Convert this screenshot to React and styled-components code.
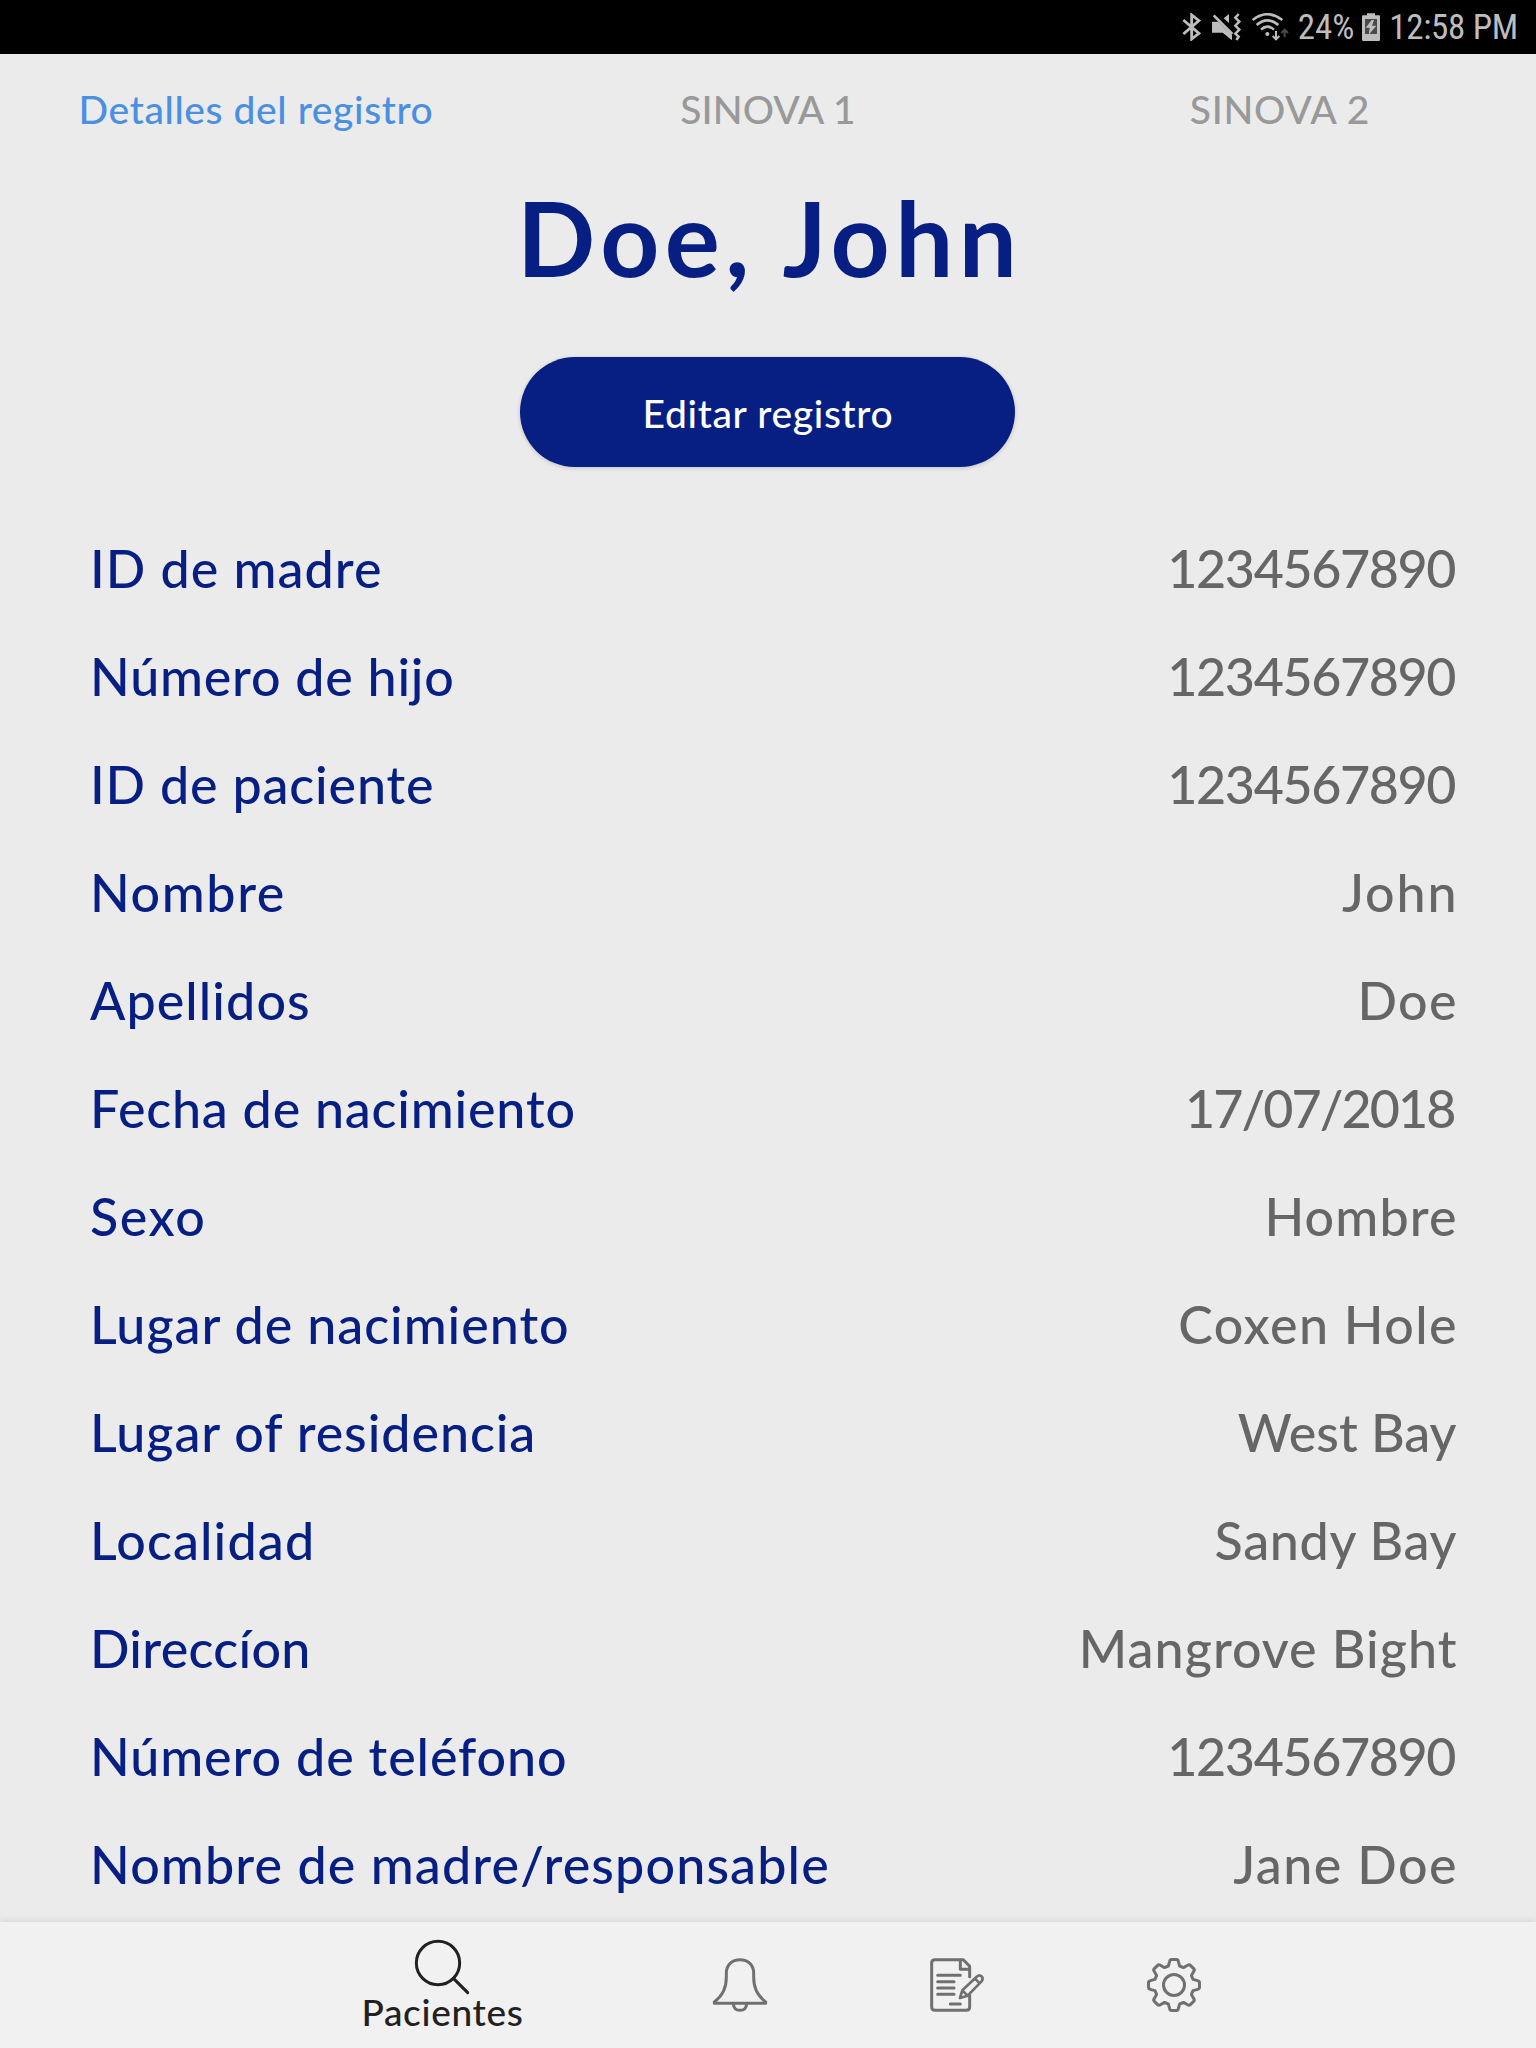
import React from 'react';
import styled, { createGlobalStyle } from 'styled-components';

const GlobalStyle = createGlobalStyle`
  * { box-sizing: border-box; }
  body { margin: 0; background: #ebebeb; }
`;

const Screen = styled.div`
  display: flex;
  flex-direction: column;
  width: 1536px;
  height: 2048px;
  overflow: hidden;
  background: #ebebeb;
  font-family: Lato, 'Open Sans', sans-serif;
  font-weight: 500;
`;

/* ---------- status bar ---------- */

const StatusBar = styled.header`
  flex: none;
  display: flex;
  align-items: center;
  justify-content: flex-end;
  gap: 11px;
  height: 54px;
  padding-right: 18px;
  background: #000;
  color: #bdbdbd;
`;

const StatusText = styled.span`
  padding-top: 1px;
  font: 400 35px/54px 'Roboto Condensed', Roboto, sans-serif;
  letter-spacing: ${(p) => p.$track}px;
  white-space: nowrap;
  margin: 0 ${(p) => p.$trim || 0}px 0 -2px;
`;

const Glyph = styled.svg`
  display: block;
  flex: none;
  width: ${(p) => p.$w}px;
  height: ${(p) => p.$h}px;
`;

const BluetoothIcon = () => (
  <Glyph $w={19} $h={28} viewBox="64 36 57 84" fill="none" stroke="currentColor" strokeWidth="8.5">
    <path d="M68 57 L115 97 L93 114 V42 L115 59 L68 99" />
  </Glyph>
);

const MuteIcon = () => (
  <Glyph $w={29} $h={28} viewBox="157 36 87 84" fill="currentColor">
    <path d="M157 62 H176 L217 103 V118 L189 95 H157 Z" />
    <path d="M192 52 L208 39 V66 Z" />
    <path d="M162 43 L218 99" fill="none" stroke="currentColor" strokeWidth="8" />
    <path
      d="M237 39 L227 50 L239 62 L227 74 L239 86 L227 98 L237 107 L230 117"
      fill="none"
      stroke="currentColor"
      strokeWidth="7.5"
    />
  </Glyph>
);

const WifiIcon = () => (
  <Glyph $w={37} $h={28} viewBox="278 36 111 84" fill="none" stroke="currentColor" strokeWidth="7.5">
    <path d="M280 57 Q324 22 369 57" />
    <path d="M292 72 Q324 44 357 72" />
    <path d="M305 86 Q324 68 344 86" />
    <circle cx="324" cy="99" r="6" fill="currentColor" stroke="none" />
    <path d="M350 90 V114 M340 105 L350 115 L360 105" strokeWidth="6" />
    <path d="M376 109 V86 M366 96 L376 86 L386 96" strokeWidth="6" stroke="#4a4a4a" />
  </Glyph>
);

const BatteryIcon = () => (
  <Glyph $w={18} $h={28} viewBox="606 36 54 84" fill="currentColor">
    <path d="M621 37 H645 V43 H657 Q660 43 660 46 V116 Q660 120 656 120 H610 Q606 120 606 116 V46 Q606 43 609 43 H621 Z" />
    <rect x="615" y="54" width="36" height="45" fill="#4a4a4a" />
    <path d="M635 57 L617 80 H629 L626 101 L649 74 H636 L642 57 Z" />
  </Glyph>
);

/* ---------- record tabs and heading ---------- */

const Tabs = styled.nav`
  flex: none;
  display: grid;
  grid-template-columns: repeat(3, 1fr);
  height: 110px;
`;

const Tab = styled.a`
  text-align: center;
  font-size: 39px;
  line-height: 110px;
  letter-spacing: ${(p) => p.$track}px;
  color: ${(p) => (p.$active ? '#4a90e2' : '#999')};
`;

const Content = styled.main`
  flex: 1;
  min-height: 0;
  display: flex;
  flex-direction: column;
  align-items: center;
  padding-right: 1px;
`;

const PatientName = styled.h1`
  margin: 13px 0 60px;
  font-size: 103px;
  font-weight: 700;
  line-height: 120px;
  letter-spacing: 5.5px;
  margin-right: -4.5px;
  color: #071e82;
  white-space: nowrap;
`;

const EditButton = styled.button`
  flex: none;
  width: 495px;
  height: 110px;
  padding: 2px 0 0 1px;
  border: 0;
  border-radius: 55px;
  background: #071e82;
  box-shadow: 0 1px 4px rgba(0, 0, 0, 0.18);
  color: #fff;
  font: 500 39px/108px Lato, sans-serif;
  letter-spacing: 0.66px;
`;

/* ---------- record fields ---------- */

const Fields = styled.dl`
  flex: none;
  align-self: stretch;
  margin: 47px 0 0;
  padding: 0 78.5px 0 90px;
`;

const Field = styled.div`
  display: flex;
  justify-content: space-between;
  height: 108px;
  font-size: 52px;
  line-height: 108px;
  white-space: nowrap;
`;

const Label = styled.dt`
  letter-spacing: ${(p) => p.$track}px;
  color: #071e82;
`;

const Value = styled.dd`
  margin: 0 ${(p) => -p.$track}px 0 0;
  letter-spacing: ${(p) => p.$track}px;
  color: #666;
`;

const fields = [
  ['ID de madre', 1.04, '1234567890', -1.38],
  ['Número de hijo', 0.79, '1234567890', -1.38],
  ['ID de paciente', 0.85, '1234567890', -1.38],
  ['Nombre', 1.6, 'John', 1.83],
  ['Apellidos', 1.08, 'Doe', 1.4],
  ['Fecha de nacimiento', 0.81, '17/07/2018', -1.9],
  ['Sexo', 1.6, 'Hombre', 1.14],
  ['Lugar de nacimiento', 0.96, 'Coxen Hole', 1.36],
  ['Lugar of residencia', 0.94, 'West Bay', 0],
  ['Localidad', 1.14, 'Sandy Bay', 0.66],
  ['Direccíon', 0.3, 'Mangrove Bight', 1.02],
  ['Número de teléfono', 0.9, '1234567890', -1.38],
  ['Nombre de madre/responsable', 1.13, 'Jane Doe', 1.44],
];

/* ---------- bottom navigation ---------- */

const BottomBar = styled.footer`
  flex: none;
  z-index: 1;
  display: grid;
  grid-template-columns: 378px 217px 217px 217px;
  justify-content: center;
  height: 126px;
  background: #f1f1f1;
  box-shadow: 0 -1px 6px rgba(0, 0, 0, 0.09);
`;

const NavItem = styled.a`
  display: flex;
  flex-direction: column;
  align-items: center;
  justify-content: ${(p) => (p.$active ? 'flex-start' : 'center')};
  padding-top: ${(p) => (p.$active ? 18 : 0)}px;
  color: ${(p) => (p.$active ? '#212121' : '#707070')};
`;

const NavIcon = styled.svg`
  display: block;
  width: 54px;
  height: 54px;
  margin-left: -1px;
  fill: none;
  stroke: currentColor;
  stroke-width: 9;
  stroke-linecap: round;
  stroke-linejoin: round;
  overflow: visible;
`;

const NavLabel = styled.span`
  margin-top: -2px;
  font-size: 37px;
  line-height: 40px;
  letter-spacing: 0.67px;
`;

const SearchIcon = () => (
  <NavIcon viewBox="225 120 162 162">
    <circle cx="294" cy="189" r="65" />
    <path d="M341 236 L383 278" />
  </NavIcon>
);

const BellIcon = () => (
  <NavIcon viewBox="1119 174 162 162">
    <path d="M1123 310 V306 C1150 284 1159 262 1159 230 V219 C1159 195 1176 179 1200 179 C1224 179 1241 195 1241 219 V230 C1241 262 1250 284 1277 306 V310 Z" />
    <path d="M1180 312 C1181 325 1189 331 1200 331 C1211 331 1219 325 1220 312" />
  </NavIcon>
);

const FormIcon = () => (
  <NavIcon viewBox="90 174 162 162">
    <path d="M209 230 V199 L190 179 H105 Q95 179 95 189 V321 Q95 331 105 331 H199 Q209 331 209 321 V286" />
    <path d="M181 180 V208 H208" />
    <path d="M113 226 H181 M113 245 H162 M113 264 H162 M113 283 H162 M151 312 H181" />
    <path
      d="M180 294 L187 271 L230 230 C241 220 254 233 244 245 L203 287 Z M187 271 L203 287 M225 236 L239 250"
      strokeWidth="8"
    />
  </NavIcon>
);

const TEETH = [0, 45, 90, 135, 180, 225, 270, 315];
const gearOutline = (() => {
  const at = (deg, x, y) => {
    const a = (deg * Math.PI) / 180;
    const px = 822 + x * Math.cos(a) - y * Math.sin(a);
    const py = 255 + x * Math.sin(a) + y * Math.cos(a);
    return `${px.toFixed(1)} ${py.toFixed(1)}`;
  };
  return (
    TEETH.map(
      (d, i) =>
        `${i ? 'L' : 'M'}${at(d, -17, -57)} L${at(d, -13, -71)} Q${at(d, -12, -76.5)} ${at(d, -7, -76.5)}` +
        ` L${at(d, 7, -76.5)} Q${at(d, 12, -76.5)} ${at(d, 13, -71)} L${at(d, 17, -57)}`
    ).join(' ') + ' Z'
  );
})();

const GearIcon = () => (
  <NavIcon viewBox="741 174 162 162">
    <path d={gearOutline} />
    <circle cx="822" cy="255" r="31.5" />
  </NavIcon>
);

export default function App() {
  return (
    <Screen>
      <GlobalStyle />
      <StatusBar>
        <BluetoothIcon />
        <MuteIcon />
        <WifiIcon />
        <StatusText $track={-0.1} $trim={-3}>24%</StatusText>
        <BatteryIcon />
        <StatusText $track={-0.3}>12:58 PM</StatusText>
      </StatusBar>
      <Tabs>
        <Tab $active $track={0.6}>Detalles del registro</Tab>
        <Tab $track={0.1}>SINOVA 1</Tab>
        <Tab $track={0.7}>SINOVA 2</Tab>
      </Tabs>
      <Content>
        <PatientName>Doe, John</PatientName>
        <EditButton>Editar registro</EditButton>
        <Fields>
          {fields.map(([label, labelTrack, value, valueTrack]) => (
            <Field key={label}>
              <Label $track={labelTrack}>{label}</Label>
              <Value $track={valueTrack}>{value}</Value>
            </Field>
          ))}
        </Fields>
      </Content>
      <BottomBar>
        <NavItem $active>
          <SearchIcon />
          <NavLabel>Pacientes</NavLabel>
        </NavItem>
        <NavItem><BellIcon /></NavItem>
        <NavItem><FormIcon /></NavItem>
        <NavItem><GearIcon /></NavItem>
      </BottomBar>
    </Screen>
  );
}
